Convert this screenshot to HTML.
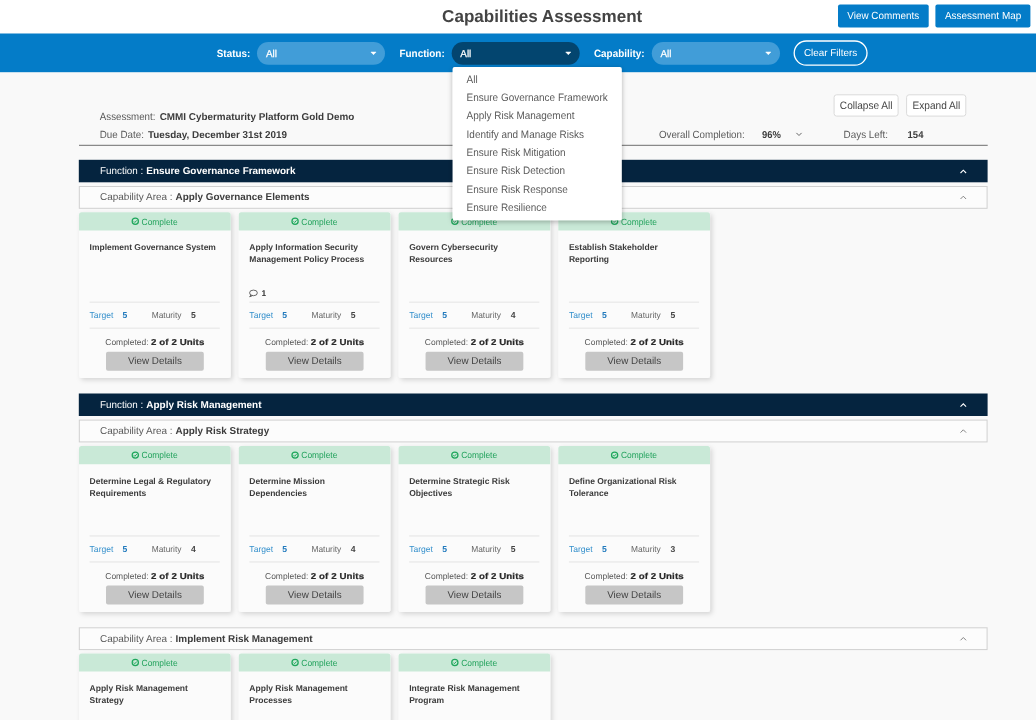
<!DOCTYPE html>
<html><head><meta charset="utf-8"><title>Capabilities Assessment</title>
<style>
*{margin:0;padding:0}
html,body{width:1036px;height:720px;overflow:hidden;background:#f9f9f9}
svg{display:block;position:absolute;left:0;top:0;filter:blur(.4px)}
text{font-family:"Liberation Sans",Arial,sans-serif;white-space:pre}
</style></head><body>
<svg width="1036" height="720" viewBox="0 0 1036 720" text-rendering="geometricPrecision">
<defs>
<filter id="sh" x="-10%" y="-10%" width="120%" height="120%"><feDropShadow dx="2" dy="2" stdDeviation="2.8" flood-color="#000" flood-opacity=".15"/></filter>
<filter id="dsh" x="-10%" y="-10%" width="120%" height="120%"><feDropShadow dx="0" dy="1.5" stdDeviation="2.5" flood-color="#000" flood-opacity=".3"/></filter>
</defs>
<rect x="0.00" y="0.00" width="1036.00" height="33.50" fill="#fff"/>
<text x="442.10" y="22.10" font-size="17.3" fill="#444" font-weight="bold" textLength="200.20" lengthAdjust="spacingAndGlyphs">Capabilities Assessment</text>
<rect x="838.00" y="4.40" width="90.70" height="23.20" fill="#047cc8" rx="2"/>
<text x="883.20" y="19.30" font-size="10.3" fill="#fff" textLength="71.80" lengthAdjust="spacingAndGlyphs" text-anchor="middle">View Comments</text>
<rect x="935.40" y="4.40" width="95.00" height="23.20" fill="#047cc8" rx="2"/>
<text x="983.10" y="19.30" font-size="10.3" fill="#fff" textLength="76.40" lengthAdjust="spacingAndGlyphs" text-anchor="middle">Assessment Map</text>
<rect x="0.00" y="33.50" width="1036.00" height="38.70" fill="#047cc8"/>
<text x="216.80" y="57.00" font-size="10.6" fill="#fff" font-weight="bold" textLength="33.40" lengthAdjust="spacingAndGlyphs">Status:</text>
<rect x="257.00" y="42.00" width="128.00" height="22.70" fill="#419dd8" rx="11.35"/>
<text x="266.00" y="57.10" font-size="10" fill="#fff" textLength="11.00" lengthAdjust="spacingAndGlyphs" stroke="#fff" stroke-width=".25">All</text>
<path d="M370.90 52 L376.10 52 L373.50 54.7 Z" fill="#fff" stroke="#fff" stroke-width=".5" stroke-linejoin="round"/>
<text x="399.50" y="57.00" font-size="10.6" fill="#fff" font-weight="bold" textLength="45.20" lengthAdjust="spacingAndGlyphs">Function:</text>
<rect x="451.70" y="42.00" width="128.00" height="22.70" fill="#03456f" rx="11.35"/>
<text x="460.30" y="57.10" font-size="10" fill="#fff" textLength="11.00" lengthAdjust="spacingAndGlyphs" stroke="#fff" stroke-width=".25">All</text>
<path d="M565.70 52 L570.90 52 L568.30 54.7 Z" fill="#fff" stroke="#fff" stroke-width=".5" stroke-linejoin="round"/>
<text x="593.90" y="57.00" font-size="10.6" fill="#fff" font-weight="bold" textLength="50.70" lengthAdjust="spacingAndGlyphs">Capability:</text>
<rect x="651.80" y="42.00" width="128.20" height="22.70" fill="#419dd8" rx="11.35"/>
<text x="660.40" y="57.10" font-size="10" fill="#fff" textLength="11.00" lengthAdjust="spacingAndGlyphs" stroke="#fff" stroke-width=".25">All</text>
<path d="M765.70 52 L770.90 52 L768.30 54.7 Z" fill="#fff" stroke="#fff" stroke-width=".5" stroke-linejoin="round"/>
<rect x="794.20" y="41.00" width="72.80" height="24.20" fill="none" rx="12.1" stroke="#fff" stroke-width="1.3"/>
<text x="830.60" y="56.40" font-size="10" fill="#fff" textLength="53.30" lengthAdjust="spacingAndGlyphs" text-anchor="middle">Clear Filters</text>
<text x="99.80" y="119.80" font-size="10.4" fill="#5a5a5a" textLength="55.60" lengthAdjust="spacingAndGlyphs">Assessment:</text>
<text x="159.70" y="119.80" font-size="10" fill="#3c3c3c" font-weight="bold" textLength="194.60" lengthAdjust="spacingAndGlyphs">CMMI Cybermaturity Platform Gold Demo</text>
<text x="99.80" y="137.90" font-size="10.4" fill="#5a5a5a" textLength="44.10" lengthAdjust="spacingAndGlyphs">Due Date:</text>
<text x="148.00" y="137.90" font-size="10" fill="#3c3c3c" font-weight="bold" textLength="139.00" lengthAdjust="spacingAndGlyphs">Tuesday, December 31st 2019</text>
<text x="658.90" y="137.70" font-size="10.4" fill="#5a5a5a" textLength="85.80" lengthAdjust="spacingAndGlyphs">Overall Completion:</text>
<text x="762.00" y="137.90" font-size="10" fill="#3c3c3c" font-weight="bold" textLength="18.90" lengthAdjust="spacingAndGlyphs">96%</text>
<path d="M796.4 132.9 L799 135.5 L801.6 132.9" fill="none" stroke="#666" stroke-width="1"/>
<text x="843.60" y="137.90" font-size="10.4" fill="#5a5a5a" textLength="44.40" lengthAdjust="spacingAndGlyphs">Days Left:</text>
<text x="907.60" y="137.90" font-size="10" fill="#3c3c3c" font-weight="bold" textLength="15.80" lengthAdjust="spacingAndGlyphs">154</text>
<rect x="834.10" y="94.80" width="64.00" height="21.30" fill="#fff" rx="2.5" stroke="#dadada" stroke-width="1"/>
<text x="866.20" y="108.90" font-size="10.8" fill="#444" textLength="52.70" lengthAdjust="spacingAndGlyphs" text-anchor="middle">Collapse All</text>
<rect x="906.60" y="94.80" width="59.20" height="21.30" fill="#fff" rx="2.5" stroke="#dadada" stroke-width="1"/>
<text x="936.40" y="108.90" font-size="10.8" fill="#444" textLength="47.70" lengthAdjust="spacingAndGlyphs" text-anchor="middle">Expand All</text>
<rect x="79.00" y="144.80" width="908.70" height="1.00" fill="#6e6e6e"/>
<rect x="78.80" y="159.80" width="908.80" height="22.50" fill="#05243f"/>
<text x="100.00" y="174.40" font-size="10" fill="#fff" textLength="43.30" lengthAdjust="spacingAndGlyphs">Function :</text>
<text x="146.30" y="174.40" font-size="9.95" fill="#fff" font-weight="bold" textLength="149.20" lengthAdjust="spacingAndGlyphs">Ensure Governance Framework</text>
<path d="M960.50 173.00 L963.30 170.20 L966.10 173.00" fill="none" stroke="#fff" stroke-width="1.1"/>
<rect x="79.30" y="186.50" width="907.80" height="21.80" fill="#fcfcfc" stroke="#d0d0d0" stroke-width="1"/>
<text x="100.00" y="200.40" font-size="10" fill="#5a5a5a" textLength="72.60" lengthAdjust="spacingAndGlyphs">Capability Area :</text>
<text x="175.60" y="200.40" font-size="9.95" fill="#3c3c3c" font-weight="bold" textLength="133.90" lengthAdjust="spacingAndGlyphs">Apply Governance Elements</text>
<path d="M960.50 199.00 L963.30 196.20 L966.10 199.00" fill="none" stroke="#777" stroke-width="0.9"/>
<rect x="78.80" y="393.50" width="908.80" height="22.50" fill="#05243f"/>
<text x="100.00" y="408.10" font-size="10" fill="#fff" textLength="43.30" lengthAdjust="spacingAndGlyphs">Function :</text>
<text x="146.30" y="408.10" font-size="9.95" fill="#fff" font-weight="bold" textLength="115.20" lengthAdjust="spacingAndGlyphs">Apply Risk Management</text>
<path d="M960.50 406.70 L963.30 403.90 L966.10 406.70" fill="none" stroke="#fff" stroke-width="1.1"/>
<rect x="79.30" y="420.10" width="907.80" height="21.80" fill="#fcfcfc" stroke="#d0d0d0" stroke-width="1"/>
<text x="100.00" y="434.00" font-size="10" fill="#5a5a5a" textLength="72.60" lengthAdjust="spacingAndGlyphs">Capability Area :</text>
<text x="175.60" y="434.00" font-size="9.95" fill="#3c3c3c" font-weight="bold" textLength="93.60" lengthAdjust="spacingAndGlyphs">Apply Risk Strategy</text>
<path d="M960.50 432.60 L963.30 429.80 L966.10 432.60" fill="none" stroke="#777" stroke-width="0.9"/>
<rect x="79.30" y="627.80" width="907.80" height="21.80" fill="#fcfcfc" stroke="#d0d0d0" stroke-width="1"/>
<text x="100.00" y="641.70" font-size="10" fill="#5a5a5a" textLength="72.60" lengthAdjust="spacingAndGlyphs">Capability Area :</text>
<text x="175.60" y="641.70" font-size="9.95" fill="#3c3c3c" font-weight="bold" textLength="137.00" lengthAdjust="spacingAndGlyphs">Implement Risk Management</text>
<path d="M960.50 640.30 L963.30 637.50 L966.10 640.30" fill="none" stroke="#777" stroke-width="0.9"/>
<g filter="url(#sh)"><rect x="79.00" y="212.30" width="151.7" height="165.8" rx="2.5" fill="#fbfbfb"/></g>
<path d="M79.00 230.40 V214.80 a2.5 2.5 0 0 1 2.5 -2.5 H228.20 a2.5 2.5 0 0 1 2.5 2.5 V230.40 Z" fill="#c9e9d7"/>
<circle cx="135.30" cy="221.30" r="3.1" fill="none" stroke="#1fa75c" stroke-width="1.25"/><path d="M133.80 221.40 L134.85 222.45 L136.80 220.35" fill="none" stroke="#1fa75c" stroke-width="1"/>
<text x="141.60" y="224.60" font-size="9" fill="#22a25c" textLength="36.00" lengthAdjust="spacingAndGlyphs">Complete</text>
<text x="89.60" y="250.10" font-size="8.5" fill="#3c3c3c" font-weight="bold" textLength="126.30" lengthAdjust="spacingAndGlyphs">Implement Governance System</text>
<rect x="89.60" y="301.70" width="130.20" height="0.90" fill="#e2e2e2"/>
<text x="89.60" y="317.80" font-size="8.6" fill="#3590cc" textLength="23.80" lengthAdjust="spacingAndGlyphs">Target</text>
<text x="122.60" y="317.80" font-size="8.6" fill="#227abd" font-weight="bold">5</text>
<text x="151.70" y="317.80" font-size="8.6" fill="#666" textLength="29.80" lengthAdjust="spacingAndGlyphs">Maturity</text>
<text x="191.10" y="317.80" font-size="8.6" fill="#444" font-weight="bold">5</text>
<rect x="89.60" y="327.70" width="130.20" height="0.90" fill="#e2e2e2"/>
<text x="105.30" y="344.70" font-size="8.6" fill="#555" textLength="43.20" lengthAdjust="spacingAndGlyphs">Completed:</text>
<text transform="translate(151.10 344.70) scale(1.13 1)" font-size="8.6" font-weight="bold" fill="#2a2a2a" textLength="47.1" lengthAdjust="spacing" stroke="#2a2a2a" stroke-width=".2">2 of 2 Units</text>
<rect x="106.00" y="351.70" width="97.80" height="19.10" fill="#c6c6c6" rx="2"/>
<text x="154.90" y="364.40" font-size="10" fill="#444" textLength="54.00" lengthAdjust="spacingAndGlyphs" text-anchor="middle">View Details</text>
<g filter="url(#sh)"><rect x="238.77" y="212.30" width="151.7" height="165.8" rx="2.5" fill="#fbfbfb"/></g>
<path d="M238.77 230.40 V214.80 a2.5 2.5 0 0 1 2.5 -2.5 H387.97 a2.5 2.5 0 0 1 2.5 2.5 V230.40 Z" fill="#c9e9d7"/>
<circle cx="295.07" cy="221.30" r="3.1" fill="none" stroke="#1fa75c" stroke-width="1.25"/><path d="M293.57 221.40 L294.62 222.45 L296.57 220.35" fill="none" stroke="#1fa75c" stroke-width="1"/>
<text x="301.37" y="224.60" font-size="9" fill="#22a25c" textLength="36.00" lengthAdjust="spacingAndGlyphs">Complete</text>
<text x="249.37" y="250.10" font-size="8.5" fill="#3c3c3c" font-weight="bold">Apply Information Security</text>
<text x="249.37" y="262.15" font-size="8.5" fill="#3c3c3c" font-weight="bold">Management Policy Process</text>
<ellipse cx="253.47" cy="292.90" rx="3.9" ry="2.8" fill="none" stroke="#444" stroke-width=".8"/><path d="M250.97 294.90 L249.67 296.80 L252.37 295.70" fill="none" stroke="#444" stroke-width=".8"/>
<text x="261.47" y="296.20" font-size="8.4" fill="#333" font-weight="bold">1</text>
<rect x="249.37" y="301.70" width="130.20" height="0.90" fill="#e2e2e2"/>
<text x="249.37" y="317.80" font-size="8.6" fill="#3590cc" textLength="23.80" lengthAdjust="spacingAndGlyphs">Target</text>
<text x="282.37" y="317.80" font-size="8.6" fill="#227abd" font-weight="bold">5</text>
<text x="311.47" y="317.80" font-size="8.6" fill="#666" textLength="29.80" lengthAdjust="spacingAndGlyphs">Maturity</text>
<text x="350.87" y="317.80" font-size="8.6" fill="#444" font-weight="bold">5</text>
<rect x="249.37" y="327.70" width="130.20" height="0.90" fill="#e2e2e2"/>
<text x="265.07" y="344.70" font-size="8.6" fill="#555" textLength="43.20" lengthAdjust="spacingAndGlyphs">Completed:</text>
<text transform="translate(310.87 344.70) scale(1.13 1)" font-size="8.6" font-weight="bold" fill="#2a2a2a" textLength="47.1" lengthAdjust="spacing" stroke="#2a2a2a" stroke-width=".2">2 of 2 Units</text>
<rect x="265.77" y="351.70" width="97.80" height="19.10" fill="#c6c6c6" rx="2"/>
<text x="314.67" y="364.40" font-size="10" fill="#444" textLength="54.00" lengthAdjust="spacingAndGlyphs" text-anchor="middle">View Details</text>
<g filter="url(#sh)"><rect x="398.54" y="212.30" width="151.7" height="165.8" rx="2.5" fill="#fbfbfb"/></g>
<path d="M398.54 230.40 V214.80 a2.5 2.5 0 0 1 2.5 -2.5 H547.74 a2.5 2.5 0 0 1 2.5 2.5 V230.40 Z" fill="#c9e9d7"/>
<circle cx="454.84" cy="221.30" r="3.1" fill="none" stroke="#1fa75c" stroke-width="1.25"/><path d="M453.34 221.40 L454.39 222.45 L456.34 220.35" fill="none" stroke="#1fa75c" stroke-width="1"/>
<text x="461.14" y="224.60" font-size="9" fill="#22a25c" textLength="36.00" lengthAdjust="spacingAndGlyphs">Complete</text>
<text x="409.14" y="250.10" font-size="8.5" fill="#3c3c3c" font-weight="bold">Govern Cybersecurity</text>
<text x="409.14" y="262.15" font-size="8.5" fill="#3c3c3c" font-weight="bold">Resources</text>
<rect x="409.14" y="301.70" width="130.20" height="0.90" fill="#e2e2e2"/>
<text x="409.14" y="317.80" font-size="8.6" fill="#3590cc" textLength="23.80" lengthAdjust="spacingAndGlyphs">Target</text>
<text x="442.14" y="317.80" font-size="8.6" fill="#227abd" font-weight="bold">5</text>
<text x="471.24" y="317.80" font-size="8.6" fill="#666" textLength="29.80" lengthAdjust="spacingAndGlyphs">Maturity</text>
<text x="510.64" y="317.80" font-size="8.6" fill="#444" font-weight="bold">4</text>
<rect x="409.14" y="327.70" width="130.20" height="0.90" fill="#e2e2e2"/>
<text x="424.84" y="344.70" font-size="8.6" fill="#555" textLength="43.20" lengthAdjust="spacingAndGlyphs">Completed:</text>
<text transform="translate(470.64 344.70) scale(1.13 1)" font-size="8.6" font-weight="bold" fill="#2a2a2a" textLength="47.1" lengthAdjust="spacing" stroke="#2a2a2a" stroke-width=".2">2 of 2 Units</text>
<rect x="425.54" y="351.70" width="97.80" height="19.10" fill="#c6c6c6" rx="2"/>
<text x="474.44" y="364.40" font-size="10" fill="#444" textLength="54.00" lengthAdjust="spacingAndGlyphs" text-anchor="middle">View Details</text>
<g filter="url(#sh)"><rect x="558.31" y="212.30" width="151.7" height="165.8" rx="2.5" fill="#fbfbfb"/></g>
<path d="M558.31 230.40 V214.80 a2.5 2.5 0 0 1 2.5 -2.5 H707.51 a2.5 2.5 0 0 1 2.5 2.5 V230.40 Z" fill="#c9e9d7"/>
<circle cx="614.61" cy="221.30" r="3.1" fill="none" stroke="#1fa75c" stroke-width="1.25"/><path d="M613.11 221.40 L614.16 222.45 L616.11 220.35" fill="none" stroke="#1fa75c" stroke-width="1"/>
<text x="620.91" y="224.60" font-size="9" fill="#22a25c" textLength="36.00" lengthAdjust="spacingAndGlyphs">Complete</text>
<text x="568.91" y="250.10" font-size="8.5" fill="#3c3c3c" font-weight="bold">Establish Stakeholder</text>
<text x="568.91" y="262.15" font-size="8.5" fill="#3c3c3c" font-weight="bold">Reporting</text>
<rect x="568.91" y="301.70" width="130.20" height="0.90" fill="#e2e2e2"/>
<text x="568.91" y="317.80" font-size="8.6" fill="#3590cc" textLength="23.80" lengthAdjust="spacingAndGlyphs">Target</text>
<text x="601.91" y="317.80" font-size="8.6" fill="#227abd" font-weight="bold">5</text>
<text x="631.01" y="317.80" font-size="8.6" fill="#666" textLength="29.80" lengthAdjust="spacingAndGlyphs">Maturity</text>
<text x="670.41" y="317.80" font-size="8.6" fill="#444" font-weight="bold">5</text>
<rect x="568.91" y="327.70" width="130.20" height="0.90" fill="#e2e2e2"/>
<text x="584.61" y="344.70" font-size="8.6" fill="#555" textLength="43.20" lengthAdjust="spacingAndGlyphs">Completed:</text>
<text transform="translate(630.41 344.70) scale(1.13 1)" font-size="8.6" font-weight="bold" fill="#2a2a2a" textLength="47.1" lengthAdjust="spacing" stroke="#2a2a2a" stroke-width=".2">2 of 2 Units</text>
<rect x="585.31" y="351.70" width="97.80" height="19.10" fill="#c6c6c6" rx="2"/>
<text x="634.21" y="364.40" font-size="10" fill="#444" textLength="54.00" lengthAdjust="spacingAndGlyphs" text-anchor="middle">View Details</text>
<g filter="url(#sh)"><rect x="79.00" y="446.10" width="151.7" height="165.8" rx="2.5" fill="#fbfbfb"/></g>
<path d="M79.00 464.20 V448.60 a2.5 2.5 0 0 1 2.5 -2.5 H228.20 a2.5 2.5 0 0 1 2.5 2.5 V464.20 Z" fill="#c9e9d7"/>
<circle cx="135.30" cy="455.10" r="3.1" fill="none" stroke="#1fa75c" stroke-width="1.25"/><path d="M133.80 455.20 L134.85 456.25 L136.80 454.15" fill="none" stroke="#1fa75c" stroke-width="1"/>
<text x="141.60" y="458.40" font-size="9" fill="#22a25c" textLength="36.00" lengthAdjust="spacingAndGlyphs">Complete</text>
<text x="89.60" y="483.90" font-size="8.5" fill="#3c3c3c" font-weight="bold">Determine Legal &amp; Regulatory</text>
<text x="89.60" y="495.95" font-size="8.5" fill="#3c3c3c" font-weight="bold">Requirements</text>
<rect x="89.60" y="535.50" width="130.20" height="0.90" fill="#e2e2e2"/>
<text x="89.60" y="551.60" font-size="8.6" fill="#3590cc" textLength="23.80" lengthAdjust="spacingAndGlyphs">Target</text>
<text x="122.60" y="551.60" font-size="8.6" fill="#227abd" font-weight="bold">5</text>
<text x="151.70" y="551.60" font-size="8.6" fill="#666" textLength="29.80" lengthAdjust="spacingAndGlyphs">Maturity</text>
<text x="191.10" y="551.60" font-size="8.6" fill="#444" font-weight="bold">4</text>
<rect x="89.60" y="561.50" width="130.20" height="0.90" fill="#e2e2e2"/>
<text x="105.30" y="578.50" font-size="8.6" fill="#555" textLength="43.20" lengthAdjust="spacingAndGlyphs">Completed:</text>
<text transform="translate(151.10 578.50) scale(1.13 1)" font-size="8.6" font-weight="bold" fill="#2a2a2a" textLength="47.1" lengthAdjust="spacing" stroke="#2a2a2a" stroke-width=".2">2 of 2 Units</text>
<rect x="106.00" y="585.50" width="97.80" height="19.10" fill="#c6c6c6" rx="2"/>
<text x="154.90" y="598.20" font-size="10" fill="#444" textLength="54.00" lengthAdjust="spacingAndGlyphs" text-anchor="middle">View Details</text>
<g filter="url(#sh)"><rect x="238.77" y="446.10" width="151.7" height="165.8" rx="2.5" fill="#fbfbfb"/></g>
<path d="M238.77 464.20 V448.60 a2.5 2.5 0 0 1 2.5 -2.5 H387.97 a2.5 2.5 0 0 1 2.5 2.5 V464.20 Z" fill="#c9e9d7"/>
<circle cx="295.07" cy="455.10" r="3.1" fill="none" stroke="#1fa75c" stroke-width="1.25"/><path d="M293.57 455.20 L294.62 456.25 L296.57 454.15" fill="none" stroke="#1fa75c" stroke-width="1"/>
<text x="301.37" y="458.40" font-size="9" fill="#22a25c" textLength="36.00" lengthAdjust="spacingAndGlyphs">Complete</text>
<text x="249.37" y="483.90" font-size="8.5" fill="#3c3c3c" font-weight="bold">Determine Mission</text>
<text x="249.37" y="495.95" font-size="8.5" fill="#3c3c3c" font-weight="bold">Dependencies</text>
<rect x="249.37" y="535.50" width="130.20" height="0.90" fill="#e2e2e2"/>
<text x="249.37" y="551.60" font-size="8.6" fill="#3590cc" textLength="23.80" lengthAdjust="spacingAndGlyphs">Target</text>
<text x="282.37" y="551.60" font-size="8.6" fill="#227abd" font-weight="bold">5</text>
<text x="311.47" y="551.60" font-size="8.6" fill="#666" textLength="29.80" lengthAdjust="spacingAndGlyphs">Maturity</text>
<text x="350.87" y="551.60" font-size="8.6" fill="#444" font-weight="bold">4</text>
<rect x="249.37" y="561.50" width="130.20" height="0.90" fill="#e2e2e2"/>
<text x="265.07" y="578.50" font-size="8.6" fill="#555" textLength="43.20" lengthAdjust="spacingAndGlyphs">Completed:</text>
<text transform="translate(310.87 578.50) scale(1.13 1)" font-size="8.6" font-weight="bold" fill="#2a2a2a" textLength="47.1" lengthAdjust="spacing" stroke="#2a2a2a" stroke-width=".2">2 of 2 Units</text>
<rect x="265.77" y="585.50" width="97.80" height="19.10" fill="#c6c6c6" rx="2"/>
<text x="314.67" y="598.20" font-size="10" fill="#444" textLength="54.00" lengthAdjust="spacingAndGlyphs" text-anchor="middle">View Details</text>
<g filter="url(#sh)"><rect x="398.54" y="446.10" width="151.7" height="165.8" rx="2.5" fill="#fbfbfb"/></g>
<path d="M398.54 464.20 V448.60 a2.5 2.5 0 0 1 2.5 -2.5 H547.74 a2.5 2.5 0 0 1 2.5 2.5 V464.20 Z" fill="#c9e9d7"/>
<circle cx="454.84" cy="455.10" r="3.1" fill="none" stroke="#1fa75c" stroke-width="1.25"/><path d="M453.34 455.20 L454.39 456.25 L456.34 454.15" fill="none" stroke="#1fa75c" stroke-width="1"/>
<text x="461.14" y="458.40" font-size="9" fill="#22a25c" textLength="36.00" lengthAdjust="spacingAndGlyphs">Complete</text>
<text x="409.14" y="483.90" font-size="8.5" fill="#3c3c3c" font-weight="bold">Determine Strategic Risk</text>
<text x="409.14" y="495.95" font-size="8.5" fill="#3c3c3c" font-weight="bold">Objectives</text>
<rect x="409.14" y="535.50" width="130.20" height="0.90" fill="#e2e2e2"/>
<text x="409.14" y="551.60" font-size="8.6" fill="#3590cc" textLength="23.80" lengthAdjust="spacingAndGlyphs">Target</text>
<text x="442.14" y="551.60" font-size="8.6" fill="#227abd" font-weight="bold">5</text>
<text x="471.24" y="551.60" font-size="8.6" fill="#666" textLength="29.80" lengthAdjust="spacingAndGlyphs">Maturity</text>
<text x="510.64" y="551.60" font-size="8.6" fill="#444" font-weight="bold">5</text>
<rect x="409.14" y="561.50" width="130.20" height="0.90" fill="#e2e2e2"/>
<text x="424.84" y="578.50" font-size="8.6" fill="#555" textLength="43.20" lengthAdjust="spacingAndGlyphs">Completed:</text>
<text transform="translate(470.64 578.50) scale(1.13 1)" font-size="8.6" font-weight="bold" fill="#2a2a2a" textLength="47.1" lengthAdjust="spacing" stroke="#2a2a2a" stroke-width=".2">2 of 2 Units</text>
<rect x="425.54" y="585.50" width="97.80" height="19.10" fill="#c6c6c6" rx="2"/>
<text x="474.44" y="598.20" font-size="10" fill="#444" textLength="54.00" lengthAdjust="spacingAndGlyphs" text-anchor="middle">View Details</text>
<g filter="url(#sh)"><rect x="558.31" y="446.10" width="151.7" height="165.8" rx="2.5" fill="#fbfbfb"/></g>
<path d="M558.31 464.20 V448.60 a2.5 2.5 0 0 1 2.5 -2.5 H707.51 a2.5 2.5 0 0 1 2.5 2.5 V464.20 Z" fill="#c9e9d7"/>
<circle cx="614.61" cy="455.10" r="3.1" fill="none" stroke="#1fa75c" stroke-width="1.25"/><path d="M613.11 455.20 L614.16 456.25 L616.11 454.15" fill="none" stroke="#1fa75c" stroke-width="1"/>
<text x="620.91" y="458.40" font-size="9" fill="#22a25c" textLength="36.00" lengthAdjust="spacingAndGlyphs">Complete</text>
<text x="568.91" y="483.90" font-size="8.5" fill="#3c3c3c" font-weight="bold">Define Organizational Risk</text>
<text x="568.91" y="495.95" font-size="8.5" fill="#3c3c3c" font-weight="bold">Tolerance</text>
<rect x="568.91" y="535.50" width="130.20" height="0.90" fill="#e2e2e2"/>
<text x="568.91" y="551.60" font-size="8.6" fill="#3590cc" textLength="23.80" lengthAdjust="spacingAndGlyphs">Target</text>
<text x="601.91" y="551.60" font-size="8.6" fill="#227abd" font-weight="bold">5</text>
<text x="631.01" y="551.60" font-size="8.6" fill="#666" textLength="29.80" lengthAdjust="spacingAndGlyphs">Maturity</text>
<text x="670.41" y="551.60" font-size="8.6" fill="#444" font-weight="bold">3</text>
<rect x="568.91" y="561.50" width="130.20" height="0.90" fill="#e2e2e2"/>
<text x="584.61" y="578.50" font-size="8.6" fill="#555" textLength="43.20" lengthAdjust="spacingAndGlyphs">Completed:</text>
<text transform="translate(630.41 578.50) scale(1.13 1)" font-size="8.6" font-weight="bold" fill="#2a2a2a" textLength="47.1" lengthAdjust="spacing" stroke="#2a2a2a" stroke-width=".2">2 of 2 Units</text>
<rect x="585.31" y="585.50" width="97.80" height="19.10" fill="#c6c6c6" rx="2"/>
<text x="634.21" y="598.20" font-size="10" fill="#444" textLength="54.00" lengthAdjust="spacingAndGlyphs" text-anchor="middle">View Details</text>
<g filter="url(#sh)"><rect x="79.00" y="653.50" width="151.7" height="165.8" rx="2.5" fill="#fbfbfb"/></g>
<path d="M79.00 671.60 V656.00 a2.5 2.5 0 0 1 2.5 -2.5 H228.20 a2.5 2.5 0 0 1 2.5 2.5 V671.60 Z" fill="#c9e9d7"/>
<circle cx="135.30" cy="662.50" r="3.1" fill="none" stroke="#1fa75c" stroke-width="1.25"/><path d="M133.80 662.60 L134.85 663.65 L136.80 661.55" fill="none" stroke="#1fa75c" stroke-width="1"/>
<text x="141.60" y="665.80" font-size="9" fill="#22a25c" textLength="36.00" lengthAdjust="spacingAndGlyphs">Complete</text>
<text x="89.60" y="691.30" font-size="8.5" fill="#3c3c3c" font-weight="bold" textLength="98.30" lengthAdjust="spacingAndGlyphs">Apply Risk Management</text>
<text x="89.60" y="703.35" font-size="8.5" fill="#3c3c3c" font-weight="bold">Strategy</text>
<rect x="89.60" y="742.90" width="130.20" height="0.90" fill="#e2e2e2"/>
<text x="89.60" y="759.00" font-size="8.6" fill="#3590cc" textLength="23.80" lengthAdjust="spacingAndGlyphs">Target</text>
<text x="122.60" y="759.00" font-size="8.6" fill="#227abd" font-weight="bold">5</text>
<text x="151.70" y="759.00" font-size="8.6" fill="#666" textLength="29.80" lengthAdjust="spacingAndGlyphs">Maturity</text>
<text x="191.10" y="759.00" font-size="8.6" fill="#444" font-weight="bold">5</text>
<rect x="89.60" y="768.90" width="130.20" height="0.90" fill="#e2e2e2"/>
<text x="105.30" y="785.90" font-size="8.6" fill="#555" textLength="43.20" lengthAdjust="spacingAndGlyphs">Completed:</text>
<text transform="translate(151.10 785.90) scale(1.13 1)" font-size="8.6" font-weight="bold" fill="#2a2a2a" textLength="47.1" lengthAdjust="spacing" stroke="#2a2a2a" stroke-width=".2">2 of 2 Units</text>
<rect x="106.00" y="792.90" width="97.80" height="19.10" fill="#c6c6c6" rx="2"/>
<text x="154.90" y="805.60" font-size="10" fill="#444" textLength="54.00" lengthAdjust="spacingAndGlyphs" text-anchor="middle">View Details</text>
<g filter="url(#sh)"><rect x="238.77" y="653.50" width="151.7" height="165.8" rx="2.5" fill="#fbfbfb"/></g>
<path d="M238.77 671.60 V656.00 a2.5 2.5 0 0 1 2.5 -2.5 H387.97 a2.5 2.5 0 0 1 2.5 2.5 V671.60 Z" fill="#c9e9d7"/>
<circle cx="295.07" cy="662.50" r="3.1" fill="none" stroke="#1fa75c" stroke-width="1.25"/><path d="M293.57 662.60 L294.62 663.65 L296.57 661.55" fill="none" stroke="#1fa75c" stroke-width="1"/>
<text x="301.37" y="665.80" font-size="9" fill="#22a25c" textLength="36.00" lengthAdjust="spacingAndGlyphs">Complete</text>
<text x="249.37" y="691.30" font-size="8.5" fill="#3c3c3c" font-weight="bold" textLength="98.30" lengthAdjust="spacingAndGlyphs">Apply Risk Management</text>
<text x="249.37" y="703.35" font-size="8.5" fill="#3c3c3c" font-weight="bold">Processes</text>
<rect x="249.37" y="742.90" width="130.20" height="0.90" fill="#e2e2e2"/>
<text x="249.37" y="759.00" font-size="8.6" fill="#3590cc" textLength="23.80" lengthAdjust="spacingAndGlyphs">Target</text>
<text x="282.37" y="759.00" font-size="8.6" fill="#227abd" font-weight="bold">5</text>
<text x="311.47" y="759.00" font-size="8.6" fill="#666" textLength="29.80" lengthAdjust="spacingAndGlyphs">Maturity</text>
<text x="350.87" y="759.00" font-size="8.6" fill="#444" font-weight="bold">5</text>
<rect x="249.37" y="768.90" width="130.20" height="0.90" fill="#e2e2e2"/>
<text x="265.07" y="785.90" font-size="8.6" fill="#555" textLength="43.20" lengthAdjust="spacingAndGlyphs">Completed:</text>
<text transform="translate(310.87 785.90) scale(1.13 1)" font-size="8.6" font-weight="bold" fill="#2a2a2a" textLength="47.1" lengthAdjust="spacing" stroke="#2a2a2a" stroke-width=".2">2 of 2 Units</text>
<rect x="265.77" y="792.90" width="97.80" height="19.10" fill="#c6c6c6" rx="2"/>
<text x="314.67" y="805.60" font-size="10" fill="#444" textLength="54.00" lengthAdjust="spacingAndGlyphs" text-anchor="middle">View Details</text>
<g filter="url(#sh)"><rect x="398.54" y="653.50" width="151.7" height="165.8" rx="2.5" fill="#fbfbfb"/></g>
<path d="M398.54 671.60 V656.00 a2.5 2.5 0 0 1 2.5 -2.5 H547.74 a2.5 2.5 0 0 1 2.5 2.5 V671.60 Z" fill="#c9e9d7"/>
<circle cx="454.84" cy="662.50" r="3.1" fill="none" stroke="#1fa75c" stroke-width="1.25"/><path d="M453.34 662.60 L454.39 663.65 L456.34 661.55" fill="none" stroke="#1fa75c" stroke-width="1"/>
<text x="461.14" y="665.80" font-size="9" fill="#22a25c" textLength="36.00" lengthAdjust="spacingAndGlyphs">Complete</text>
<text x="409.14" y="691.30" font-size="8.5" fill="#3c3c3c" font-weight="bold">Integrate Risk Management</text>
<text x="409.14" y="703.35" font-size="8.5" fill="#3c3c3c" font-weight="bold">Program</text>
<rect x="409.14" y="742.90" width="130.20" height="0.90" fill="#e2e2e2"/>
<text x="409.14" y="759.00" font-size="8.6" fill="#3590cc" textLength="23.80" lengthAdjust="spacingAndGlyphs">Target</text>
<text x="442.14" y="759.00" font-size="8.6" fill="#227abd" font-weight="bold">5</text>
<text x="471.24" y="759.00" font-size="8.6" fill="#666" textLength="29.80" lengthAdjust="spacingAndGlyphs">Maturity</text>
<text x="510.64" y="759.00" font-size="8.6" fill="#444" font-weight="bold">5</text>
<rect x="409.14" y="768.90" width="130.20" height="0.90" fill="#e2e2e2"/>
<text x="424.84" y="785.90" font-size="8.6" fill="#555" textLength="43.20" lengthAdjust="spacingAndGlyphs">Completed:</text>
<text transform="translate(470.64 785.90) scale(1.13 1)" font-size="8.6" font-weight="bold" fill="#2a2a2a" textLength="47.1" lengthAdjust="spacing" stroke="#2a2a2a" stroke-width=".2">2 of 2 Units</text>
<rect x="425.54" y="792.90" width="97.80" height="19.10" fill="#c6c6c6" rx="2"/>
<text x="474.44" y="805.60" font-size="10" fill="#444" textLength="54.00" lengthAdjust="spacingAndGlyphs" text-anchor="middle">View Details</text>
<g filter="url(#dsh)"><rect x="452.6" y="67" width="169.2" height="153.2" rx="2" fill="#fff"/></g>
<text transform="translate(466.60 82.80) scale(0.922 1)" font-size="10.8" fill="#5a5a5a">All</text>
<text transform="translate(466.60 101.09) scale(0.922 1)" font-size="10.8" fill="#5a5a5a">Ensure Governance Framework</text>
<text transform="translate(466.60 119.38) scale(0.922 1)" font-size="10.8" fill="#5a5a5a">Apply Risk Management</text>
<text transform="translate(466.60 137.67) scale(0.922 1)" font-size="10.8" fill="#5a5a5a">Identify and Manage Risks</text>
<text transform="translate(466.60 155.96) scale(0.922 1)" font-size="10.8" fill="#5a5a5a">Ensure Risk Mitigation</text>
<text transform="translate(466.60 174.25) scale(0.922 1)" font-size="10.8" fill="#5a5a5a">Ensure Risk Detection</text>
<text transform="translate(466.60 192.54) scale(0.922 1)" font-size="10.8" fill="#5a5a5a">Ensure Risk Response</text>
<text transform="translate(466.60 210.83) scale(0.922 1)" font-size="10.8" fill="#5a5a5a">Ensure Resilience</text>
</svg>
</body></html>
